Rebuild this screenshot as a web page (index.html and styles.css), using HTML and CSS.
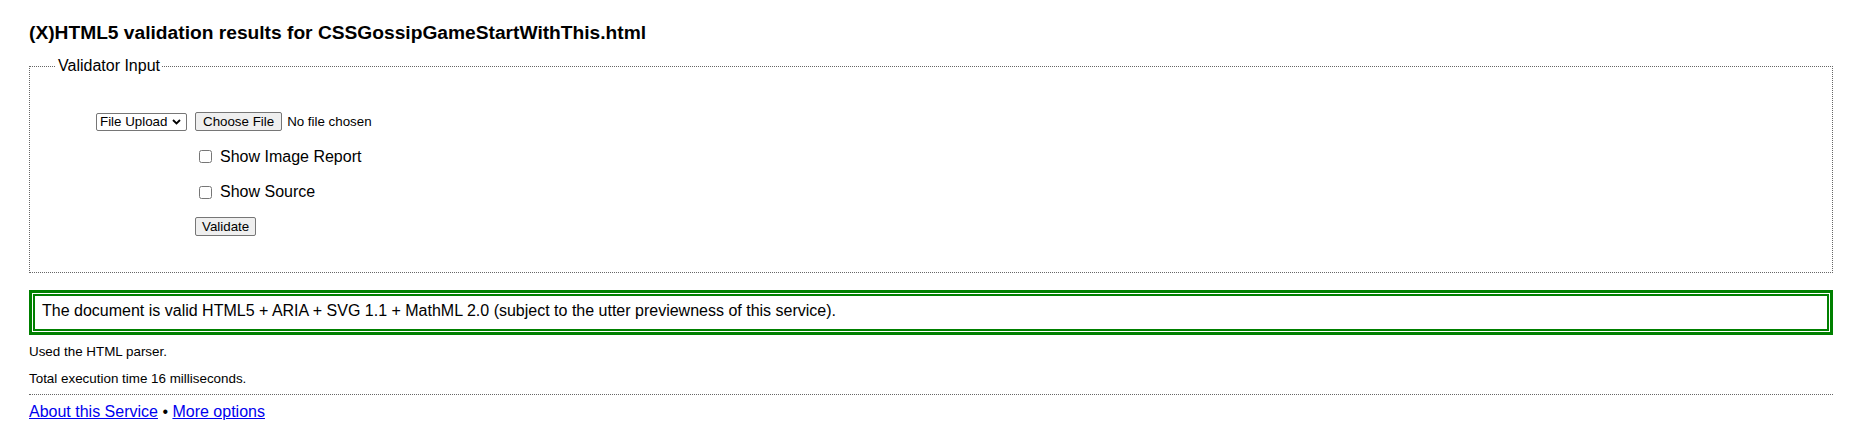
FILE: index.html
```html
<!DOCTYPE html>
<html lang="en">
<head>
<meta charset="utf-8">
<title>Validation results</title>
<link rel="stylesheet" href="styles.css">
</head>
<body>
<h1 class="title">(X)HTML5 validation results for CSSGossipGameStartWithThis.html</h1>
<form class="form">
  <fieldset class="input-box">
    <legend class="legend">Validator Input</legend>
    <div class="grid">
      <div class="cell-head">
        <span class="select-wrap">
          <select class="select"><option>File Upload</option></select>
          <svg class="chevron" width="9" height="6" viewBox="0 0 9 6"><path d="M1 1 L4.5 4.5 L8 1" fill="none" stroke="#000" stroke-width="1.8"/></svg>
        </span>
      </div>
      <div class="cell"><button type="button" class="btn file-btn">Choose File</button><span class="file-text">No file chosen</span></div>
      <div class="cell-head"></div>
      <div class="cell"><label class="check"><input type="checkbox" class="box">Show Image Report</label></div>
      <div class="cell-head"></div>
      <div class="cell"><label class="check"><input type="checkbox" class="box">Show Source</label></div>
      <div class="cell-head"></div>
      <div class="cell"><button type="button" class="btn">Validate</button></div>
    </div>
  </fieldset>
</form>
<p class="success">The document is valid HTML5 + ARIA + SVG 1.1 + MathML 2.0 (subject to the utter previewness of this service).</p>
<p class="note note-first">Used the HTML parser.</p>
<p class="note">Total execution time 16 milliseconds.</p>
<hr class="rule">
<p class="links"><a href="#">About this Service</a> • <a href="#">More options</a></p>
</body>
</html>
```
FILE: styles.css
```css
html, body {
  background: #fff;
}
body {
  margin: 0;
  padding: 22px 25px 20px 29px;
  font-family: "Liberation Sans", Arial, sans-serif;
  color: #000;
}
.title {
  font-size: 19.2px;
  line-height: 22px;
  font-weight: bold;
  margin: 0 0 13px 0;
}
.form {
  margin: 0;
}
.input-box {
  margin: 0;
  border: 1px dotted #666;
  padding: 30px 0 28px 26px;
  min-width: 0;
}
.legend {
  font-size: 16px;
  line-height: 18px;
  padding: 0 2px;
}
.grid {
  margin-left: 40px;
  display: grid;
  grid-template-columns: 99px auto;
  grid-template-rows: 33px 37px 34px 35px;
  align-items: center;
  justify-items: start;
}
.cell {
  display: flex;
  align-items: center;
}
.select-wrap {
  position: relative;
  display: inline-block;
  height: 18px;
}
.select {
  appearance: none;
  -webkit-appearance: none;
  width: 91px;
  height: 18px;
  margin: 0;
  padding: 0 18px 0 3px;
  border: 1px solid #767676;
  border-radius: 2px;
  background: #fff;
  font-family: "Liberation Sans", Arial, sans-serif;
  font-size: 13.33px;
  line-height: 16px;
  color: #000;
  display: block;
}
.chevron {
  position: absolute;
  right: 6px;
  top: 6px;
  pointer-events: none;
}
.btn {
  height: 19px;
  margin: 0;
  padding: 0 6px;
  border: 1px solid #767676;
  border-radius: 2px;
  background: #efefef;
  font-family: "Liberation Sans", Arial, sans-serif;
  font-size: 13.33px;
  line-height: 16px;
  color: #000;
}
.file-btn {
  padding: 0 7px;
}
.file-text {
  margin-left: 5px;
  font-size: 13.33px;
}
.check {
  display: flex;
  align-items: center;
  font-size: 16px;
  line-height: 18px;
}
.box {
  width: 13px;
  height: 13px;
  margin: 0 8px 0 4px;
}
.success {
  margin: 17px 0 0 0;
  border: 3px solid #008000;
  box-shadow: inset 0 0 0 1px #fff, inset 0 0 0 3px #008000;
  padding: 9px 10px 12px 10px;
  font-size: 16px;
  line-height: 18px;
}
.note {
  font-size: 13.4px;
  line-height: 16px;
  margin: 11px 0 0 0;
}
.note-first {
  margin-top: 9px;
}
.rule {
  margin: 7px 0 0 0;
  border: 0;
  border-top: 1px dotted #666;
  height: 0;
}
.links {
  margin: 8px 0 0 0;
  font-size: 16px;
  line-height: 18px;
}
.links a {
  color: #0000ee;
}
```
